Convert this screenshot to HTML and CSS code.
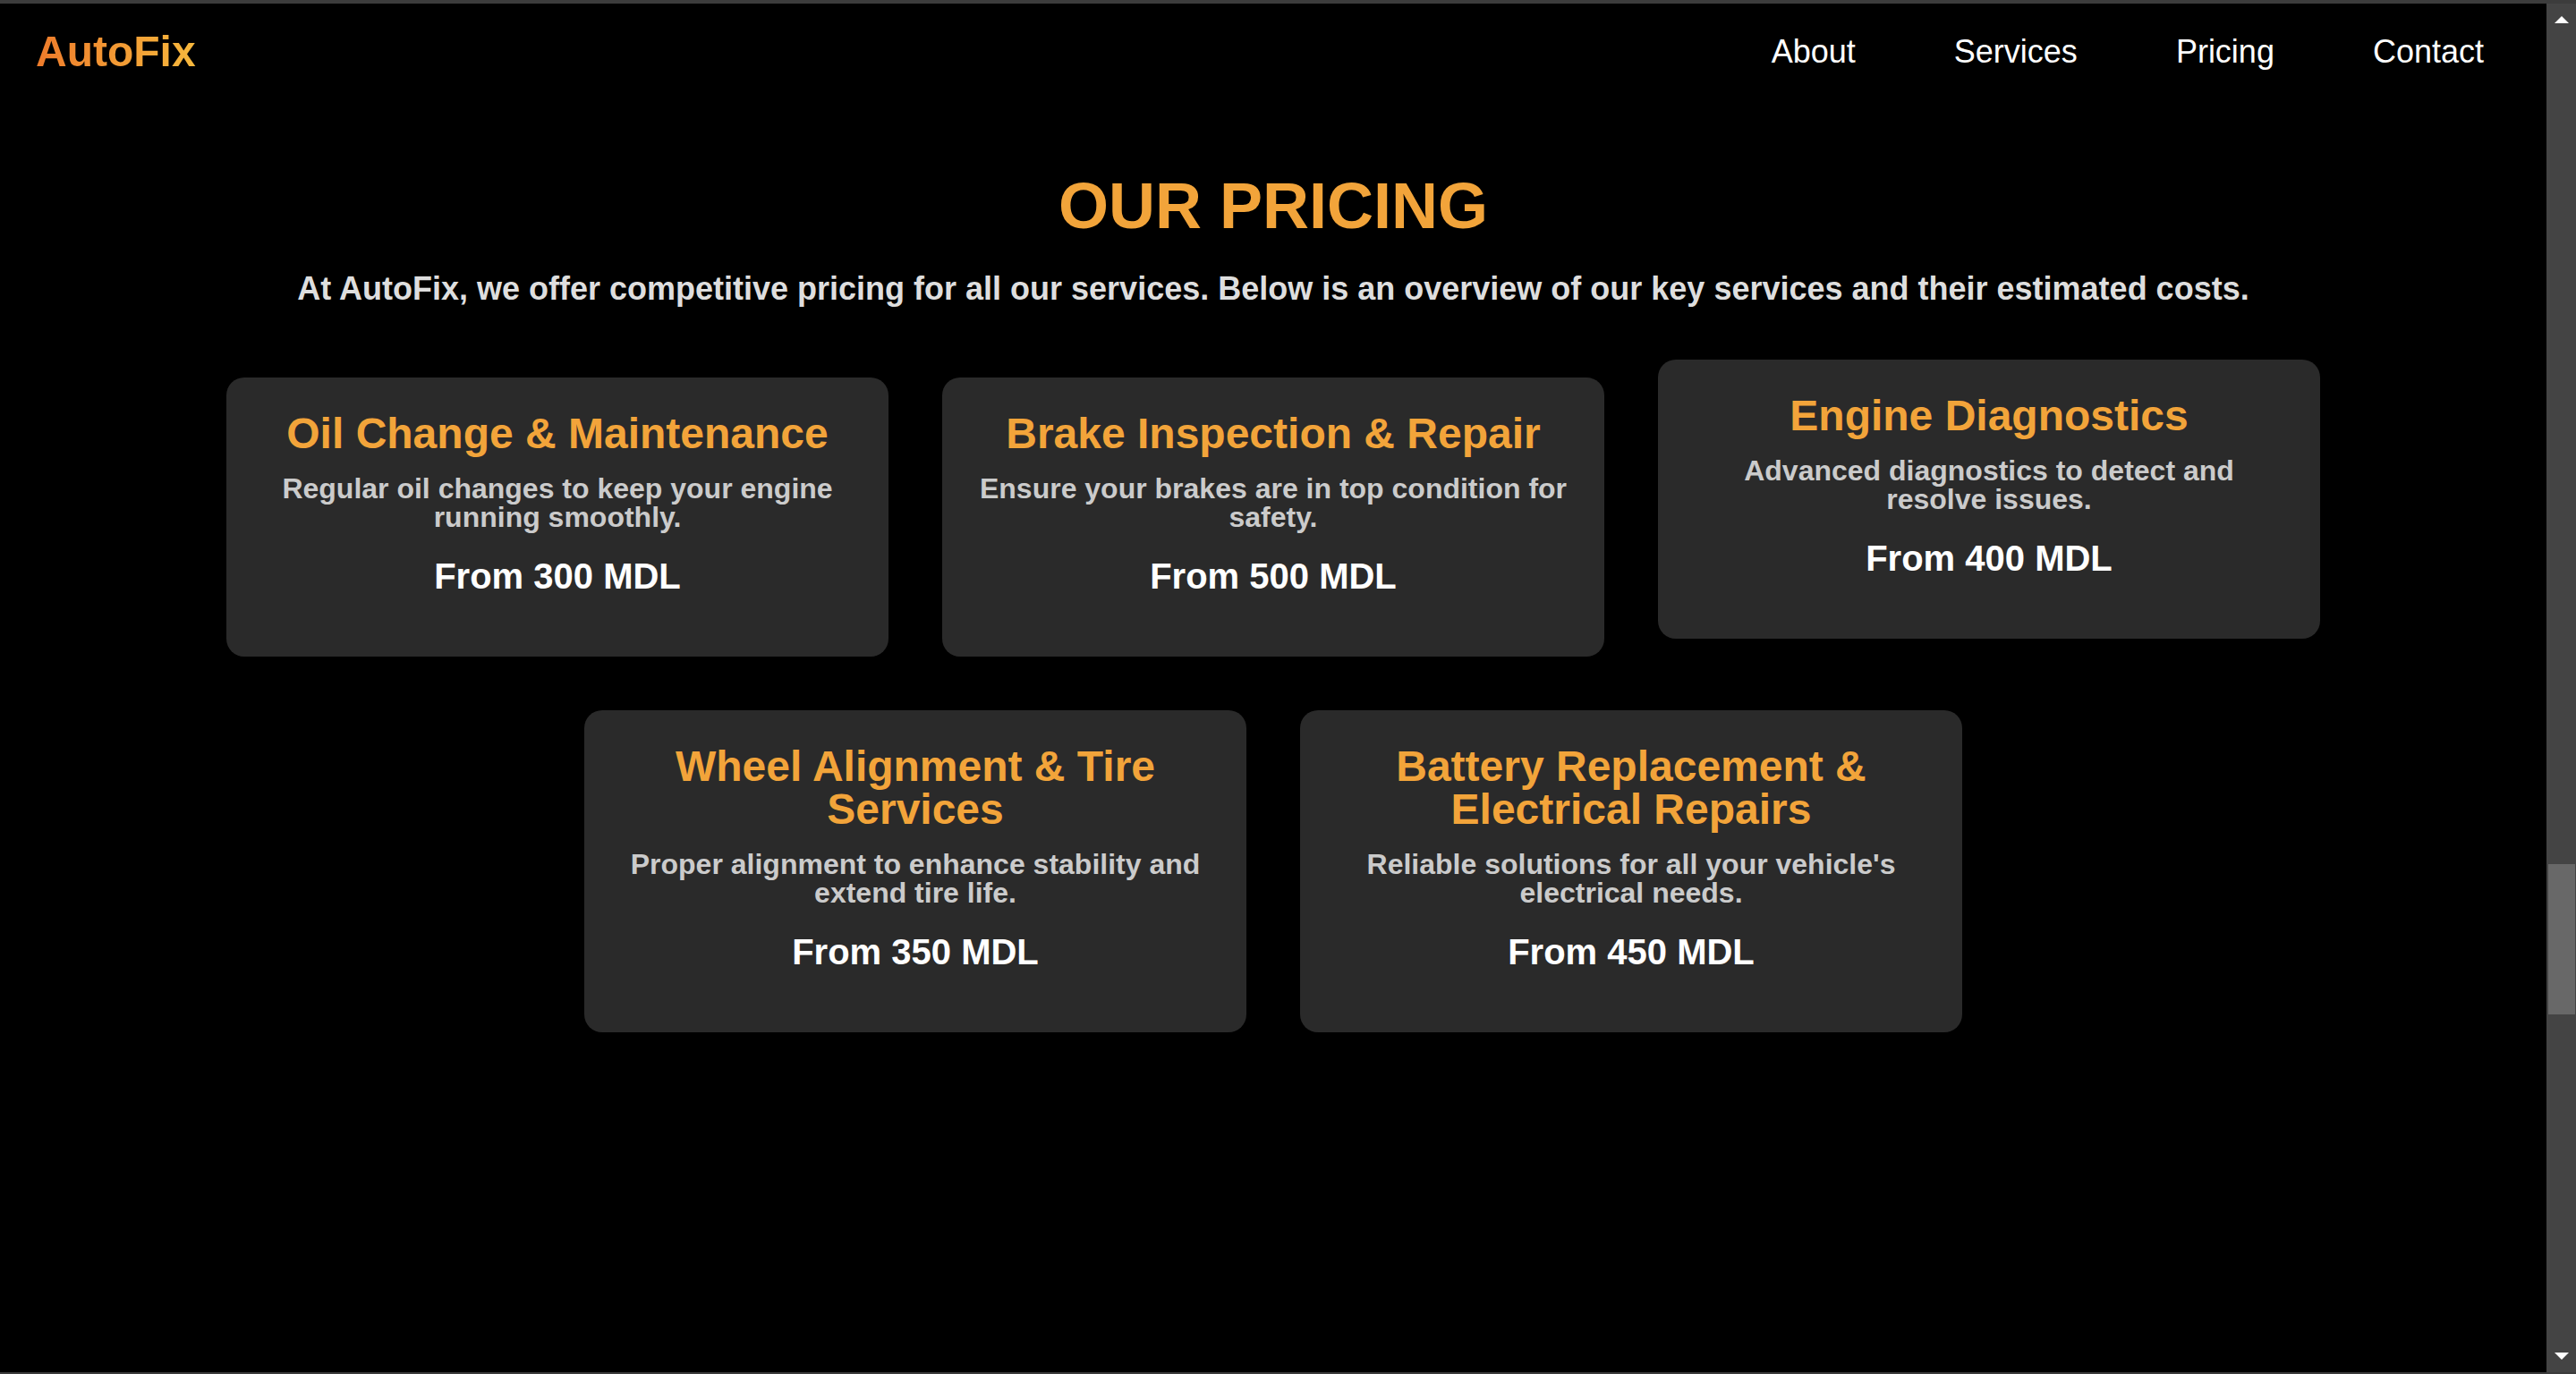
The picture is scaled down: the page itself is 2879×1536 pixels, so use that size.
FILE: index.html
```html
<!DOCTYPE html>
<html lang="en">
<head>
<meta charset="utf-8">
<title>AutoFix - Pricing</title>
<link rel="stylesheet" href="styles.css">
</head>
<body>
<div class="window">
  <div class="viewport">
    <div class="page">
      <header class="site-header">
        <div class="logo">AutoFix</div>
        <nav class="nav">
          <a class="nav-link" href="#about">About</a>
          <a class="nav-link" href="#services">Services</a>
          <a class="nav-link" href="#pricing">Pricing</a>
          <a class="nav-link" href="#contact">Contact</a>
        </nav>
      </header>
      <section class="pricing" id="pricing">
        <h2 class="pricing-title">OUR PRICING</h2>
        <p class="pricing-intro">At AutoFix, we offer competitive pricing for all our services. Below is an overview of our key services and their estimated costs.</p>
        <div class="cards">
          <div class="card">
            <h3 class="card-title">Oil Change &amp; Maintenance</h3>
            <p class="card-desc">Regular oil changes to keep your engine running smoothly.</p>
            <p class="card-price">From 300 MDL</p>
          </div>
          <div class="card">
            <h3 class="card-title">Brake Inspection &amp; Repair</h3>
            <p class="card-desc">Ensure your brakes are in top condition for safety.</p>
            <p class="card-price">From 500 MDL</p>
          </div>
          <div class="card card-hover">
            <h3 class="card-title">Engine Diagnostics</h3>
            <p class="card-desc">Advanced diagnostics to detect and resolve issues.</p>
            <p class="card-price">From 400 MDL</p>
          </div>
          <div class="card">
            <h3 class="card-title">Wheel Alignment &amp; Tire Services</h3>
            <p class="card-desc">Proper alignment to enhance stability and extend tire life.</p>
            <p class="card-price">From 350 MDL</p>
          </div>
          <div class="card">
            <h3 class="card-title">Battery Replacement &amp; Electrical Repairs</h3>
            <p class="card-desc">Reliable solutions for all your vehicle's electrical needs.</p>
            <p class="card-price">From 450 MDL</p>
          </div>
        </div>
      </section>
    </div>
    <div class="scrollbar">
      <div class="sb-button"><span class="sb-arrow-up"></span></div>
      <div class="sb-track"><div class="sb-thumb"></div></div>
      <div class="sb-button"><span class="sb-arrow-down"></span></div>
    </div>
  </div>
</div>
</body>
</html>
```

FILE: styles.css
```css
html, body {
  margin: 0;
  padding: 0;
  background: #000;
}

body {
  font-family: "Liberation Sans", Arial, sans-serif;
  color: #fff;
}

.window {
  height: 1536px;
  box-sizing: border-box;
  border-top: 4px solid #3c3c3c;
  border-bottom: 2px solid #3c3c3c;
  overflow: hidden;
}

.viewport {
  display: flex;
  height: 1530px;
}

.page {
  flex: 1;
  min-width: 0;
  overflow: hidden;
  background: #000;
}

/* Header */
.site-header {
  display: flex;
  align-items: center;
  justify-content: space-between;
  height: 107px;
  padding: 0 70px 0 40px;
}

.logo {
  font-size: 48px;
  line-height: 55px;
  font-weight: bold;
  background: linear-gradient(90deg, #ee7b2b 0%, #f7b83d 100%);
  -webkit-background-clip: text;
  background-clip: text;
  color: transparent;
}

.nav {
  display: flex;
  gap: 110px;
}

.nav-link {
  font-size: 36px;
  line-height: 41px;
  color: #fff;
  text-decoration: none;
}

/* Pricing section */
.pricing {
  padding: 78px 40px 0;
  text-align: center;
}

.pricing-title {
  margin: 0;
  font-size: 72px;
  line-height: 83px;
  font-weight: bold;
  color: #f2a43a;
}

.pricing-intro {
  margin: 30px 0 0;
  font-size: 36px;
  line-height: 41px;
  font-weight: bold;
  color: #dedede;
  white-space: nowrap;
}

.cards {
  display: flex;
  flex-wrap: wrap;
  justify-content: center;
  align-items: flex-start;
  gap: 60px;
  margin-top: 79px;
}

.card {
  width: 740px;
  box-sizing: border-box;
  padding: 39px 39px 30px;
  background: #2a2a2a;
  border-radius: 20px;
  text-align: center;
}

.card-hover {
  transform: translateY(-20px);
}

.card-title {
  margin: 0 0 21px;
  font-size: 48px;
  line-height: 48px;
  font-weight: bold;
  color: #f2a43a;
}

.card-desc {
  margin: 0 0 30px;
  font-size: 32px;
  line-height: 32px;
  font-weight: bold;
  color: #cbcbcb;
}

.card-price {
  margin: 0 0 40px;
  font-size: 40px;
  line-height: 40px;
  font-weight: bold;
  color: #fff;
}

/* Scrollbar (window chrome) */
.scrollbar {
  width: 33px;
  flex: none;
  display: flex;
  flex-direction: column;
  background: #444;
}

.sb-button {
  height: 36px;
  flex: none;
  display: flex;
  align-items: center;
  justify-content: center;
}

.sb-arrow-up {
  width: 0;
  height: 0;
  border-left: 8px solid transparent;
  border-right: 8px solid transparent;
  border-bottom: 8px solid #fff;
}

.sb-arrow-down {
  width: 0;
  height: 0;
  border-left: 8px solid transparent;
  border-right: 8px solid transparent;
  border-top: 8px solid #fff;
}

.sb-track {
  flex: 1;
}

.sb-thumb {
  margin: 926px 1px 0 2px;
  height: 168px;
  background: #686868;
}
```
